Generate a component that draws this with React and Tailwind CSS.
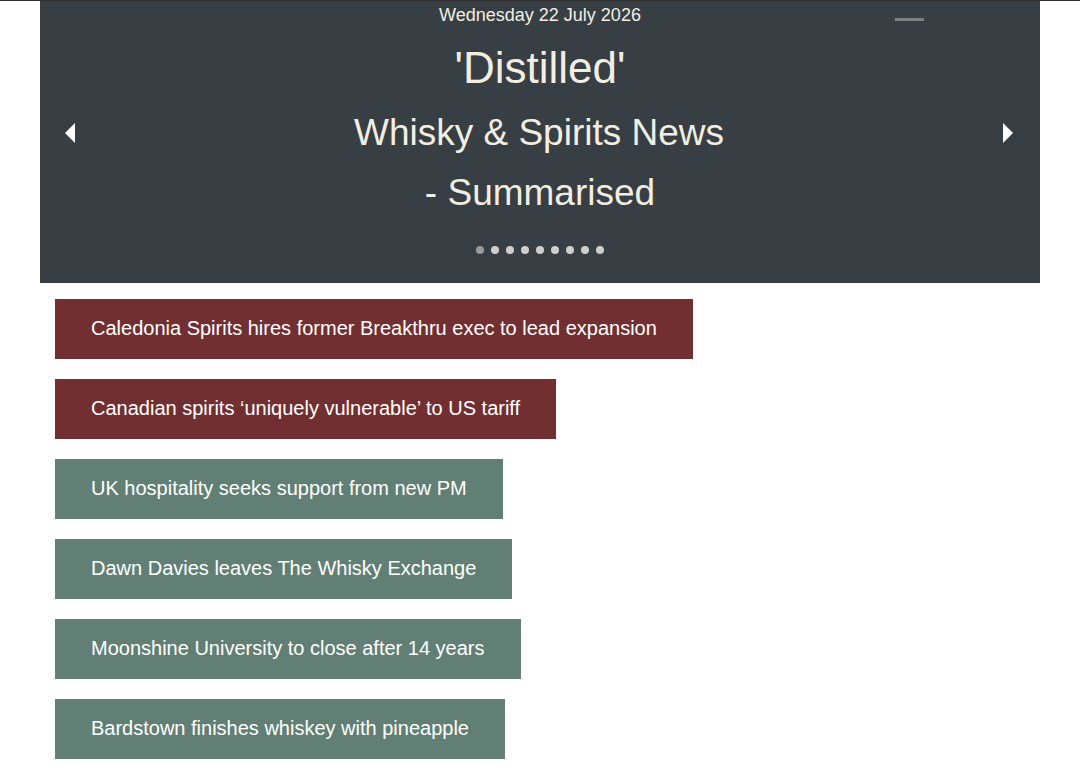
import React from 'react';

const news = [
  { title: 'Caledonia Spirits hires former Breakthru exec to lead expansion', hot: true },
  { title: 'Canadian spirits \u2018uniquely vulnerable\u2019 to US tariff', hot: true },
  { title: 'UK hospitality seeks support from new PM', hot: false },
  { title: 'Dawn Davies leaves The Whisky Exchange', hot: false },
  { title: 'Moonshine University to close after 14 years', hot: false },
  { title: 'Bardstown finishes whiskey with pineapple', hot: false },
];

const App = () => {
  return (
    <div
      className="min-h-screen bg-white border-t border-[#2e2e2e]"
      style={{ fontFamily: '"Liberation Sans", Arial, sans-serif' }}
    >
      <div className="mx-[40px] h-[282px] bg-[#373e44] relative flex flex-col items-center text-[#f2eee2]">
        <div className="absolute left-[855px] top-[17px] w-[29px] h-[3px] bg-[#7b8283]" />
        <div className="text-[18px] leading-none mt-[5px]">Wednesday 22 July 2026</div>
        <div className="text-[44px] leading-none mt-[22px]">'Distilled'</div>
        <div className="w-full flex items-center justify-between pl-[24px] pr-[26px] mt-[24px]">
          <svg width="12" height="20" viewBox="0 0 12 20">
            <polygon points="11,0 11,20 1,10" fill="#fff" />
          </svg>
          <div className="text-[37px] leading-none">Whisky &amp; Spirits News</div>
          <svg width="12" height="20" viewBox="0 0 12 20">
            <polygon points="1,0 1,20 11,10" fill="#fff" />
          </svg>
        </div>
        <div className="text-[37px] leading-none mt-[23px]">- Summarised</div>
        <div className="flex gap-[7px] mt-[35px]">
          {Array.from({ length: 9 }).map((_, i) => (
            <span
              key={i}
              className={`w-[8px] h-[8px] rounded-full ${i === 0 ? 'bg-[#9a9a9a]' : 'bg-[#cfcfcf]'}`}
            />
          ))}
        </div>
      </div>
      <div className="px-[55px] pt-[16px] flex flex-col items-start gap-[20px]">
        {news.map((n) => (
          <div
            key={n.title}
            className={`h-[60px] flex items-center px-[36px] pb-[2px] text-[20px] text-white ${
              n.hot ? 'bg-[#722f32]' : 'bg-[#617f74]'
            }`}
          >
            {n.title}
          </div>
        ))}
      </div>
    </div>
  );
};

export default App;
